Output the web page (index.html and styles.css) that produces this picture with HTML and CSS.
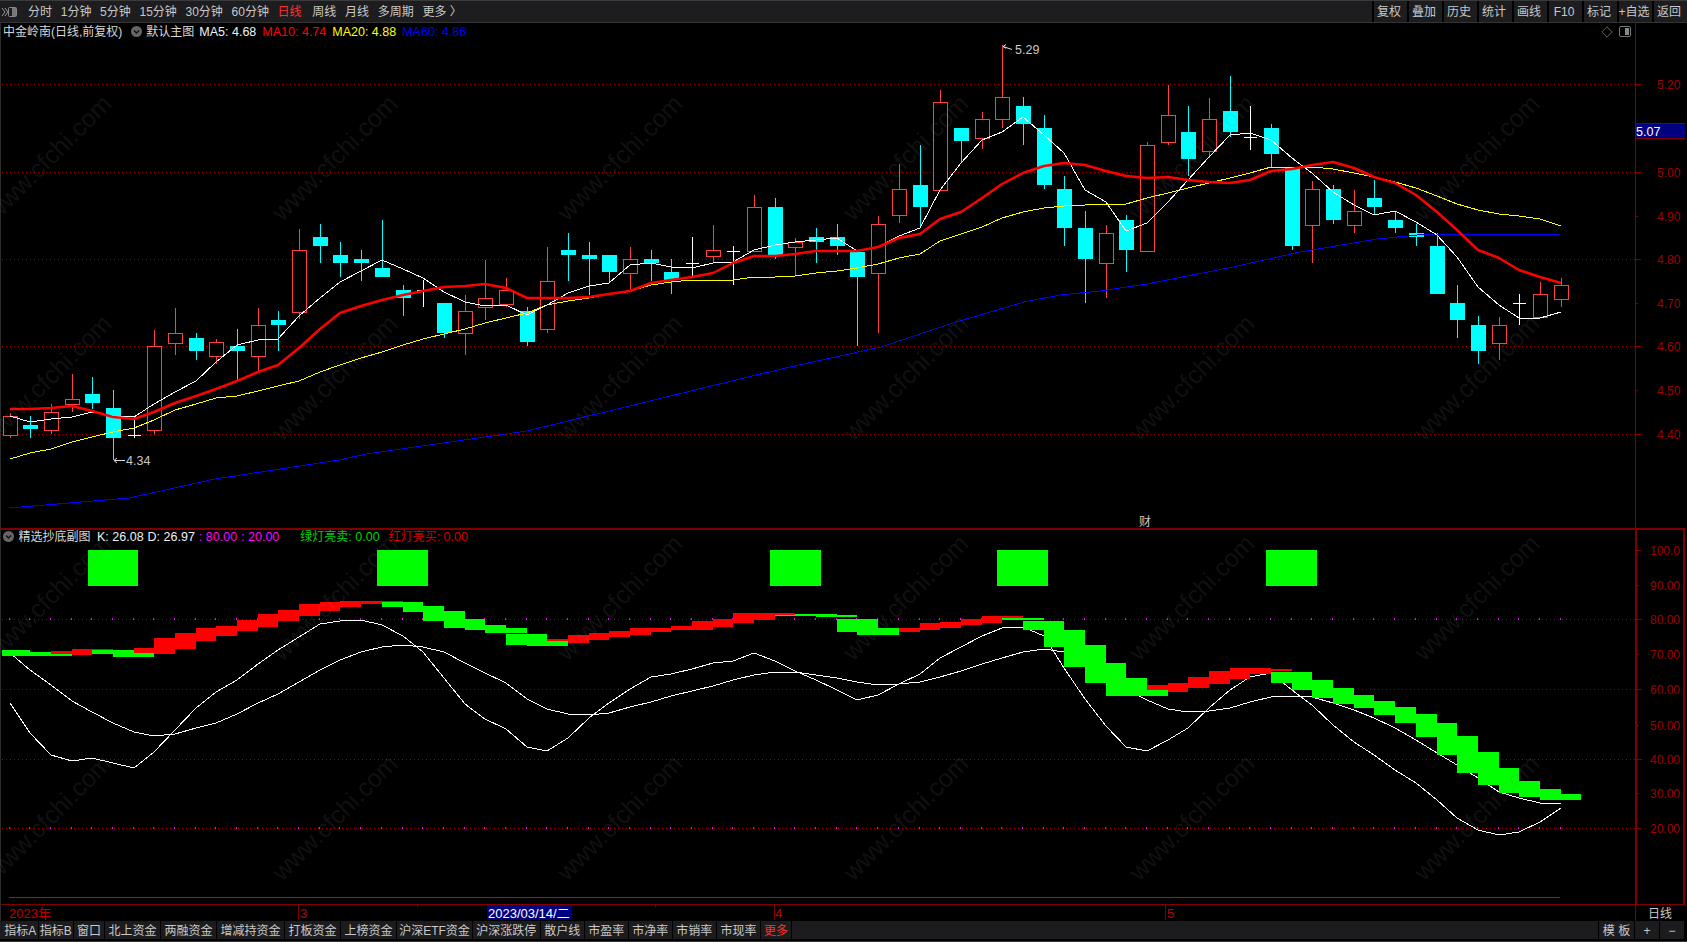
FILE: index.html
```html
<!DOCTYPE html>
<html lang="zh-CN">
<head>
<meta charset="utf-8">
<title>中金岭南 日线</title>
<link rel="stylesheet" href="styles.css">
</head>
<body>
<header class="topbar">
  <svg class="winicon" width="17" height="14" viewBox="0 0 17 14"><path d="M1 3l3 4-3 4M4 3l3 4-3 4" fill="none" stroke="#999"/><rect x="7.5" y="2.5" width="8" height="9" rx="1" fill="none" stroke="#888"/><rect x="11" y="3" width="4" height="8" fill="#777"/></svg>
  <nav class="periods">
    <span>分时</span><span>1分钟</span><span>5分钟</span><span>15分钟</span><span>30分钟</span><span>60分钟</span><span class="active">日线</span><span>周线</span><span>月线</span><span>多周期</span><span>更多 〉</span>
  </nav>
  <nav class="tools">
    <span>复权</span><span>叠加</span><span>历史</span><span>统计</span><span>画线</span><span>F10</span><span>标记</span><span>+自选</span><span>返回</span>
  </nav>
</header>

<main class="chart-area">
  <svg id="chart" class="chart-canvas" width="1687" height="899" viewBox="0 22 1687 899"></svg>
  <section class="panel-main">
    <div class="legend">
      <span class="name">中金岭南(日线,前复权)</span>
      <svg class="toggle" width="11" height="11" viewBox="0 0 11 11"><circle cx="5.5" cy="5.5" r="5.5" fill="#666"/><path d="M3 4.5l2.5 2.5L8 4.5" fill="none" stroke="#111" stroke-width="1.4"/></svg>
      <span class="name tmpl">默认主图</span>
      <span class="val c-white">MA5: 4.68</span>
      <span class="val c-red">MA10: 4.74</span>
      <span class="val c-yellow">MA20: 4.88</span>
      <span class="val c-blue">MA60: 4.86</span>
      <span class="legend-icons">
        <svg width="12" height="12" viewBox="0 0 12 12"><path d="M6 .8L11.2 6 6 11.2.8 6z" fill="none" stroke="#666"/></svg>
        <svg width="12" height="11" viewBox="0 0 12 11"><rect x=".5" y=".5" width="11" height="10" rx="1.5" fill="none" stroke="#777"/><rect x="6" y="2" width="4" height="7" fill="#888"/></svg>
      </span>
    </div>
  </section>
  <section class="panel-sub">
    <div class="legend legend-sub">
      <svg class="toggle-sub" width="11" height="11" viewBox="0 0 11 11"><circle cx="5.5" cy="5.5" r="5.5" fill="#666"/><path d="M3 4.5l2.5 2.5L8 4.5" fill="none" stroke="#111" stroke-width="1.4"/></svg>
      <span class="name subname">精选抄底副图</span>
      <span class="val tight c-white">K: 26.08</span>
      <span class="val tight c-white">D: 26.97</span>
      <span class="val tight c-magenta">: 80.00</span>
      <span class="val wide c-magenta">: 20.00</span>
      <span class="val lamp c-green"><span class="zh">绿灯亮卖</span>: 0.00</span>
      <span class="val c-dred"><span class="zh">红灯亮买</span>: 0.00</span>
    </div>
  </section>
</main>

<footer class="bottombar">
  <nav class="tabs">
    <span class="narrow">指标A</span><span class="narrow">指标B</span><span class="short">窗口</span><span>北上资金</span><span>两融资金</span><span>增减持资金</span><span>打板资金</span><span>上榜资金</span><span class="etf">沪深ETF资金</span><span>沪深涨跌停</span><span>散户线</span><span>市盈率</span><span>市净率</span><span>市销率</span><span>市现率</span><span class="short active">更多</span>
  </nav>
  <nav class="tabs-right">
    <span class="tpl">模 板</span><span class="pm">+</span><span class="pm">−</span>
  </nav>
</footer>
<div class="edge"></div>
<script src="chart.js"></script>
</body>
</html>
```

FILE: styles.css
```css
* { box-sizing: border-box; }
html, body { margin: 0; padding: 0; background: #000; }
body {
  width: 1687px; height: 942px; overflow: hidden;
  display: flex; flex-direction: column;
  font-family: "Liberation Sans", "Noto Sans CJK SC", sans-serif;
  font-size: 12px; color: #c8c8c8;
}
.topbar {
  height: 23px; flex: none; display: flex; align-items: center;
  background: #1d1d1f; border-top: 1px solid #3a3a3a; border-bottom: 1px solid #333;
}
.winicon { margin-left: 1px; flex: none; }
.periods { display: flex; gap: 8.7px; margin-left: 10px; line-height: 16px; }
.periods .active { margin-right: 2px; color: #ff3030; }
.tools { display: flex; margin-left: auto; height: 100%; line-height: 16px; }
.tools span {
  width: 35px; display: flex; align-items: center; justify-content: center;
  border-left: 2px solid #000; white-space: nowrap; padding-right: 3px;
}
.chart-area { position: relative; height: 898px; flex: none; overflow: hidden; }
.chart-canvas { position: absolute; left: 0; top: -1px; }
.panel-main { position: relative; height: 506px; }
.panel-sub { position: relative; }
.legend {
  display: flex; align-items: center; height: 17px; padding-left: 3px;
  font-size: 12.5px; line-height: 16px; white-space: nowrap;
}
.legend-sub { padding-left: 3px; height: 15px; }
.name { font-size: 12px; color: #d8d8d8; }
.zh { font-size: 12px; }
.toggle { margin-left: 9px; flex: none; }
.tmpl { margin-left: 4px; margin-right: 5px; }
.toggle-sub { flex: none; }
.subname { margin-left: 4.5px; margin-right: 6.5px; }
.val { margin-right: 6px; }
.tight { margin-right: 4px; }
.wide { margin-right: 21px; }
.lamp { margin-right: 9px; }
.legend-icons { margin-left: auto; display: flex; gap: 6px; align-items: center; margin-right: 56px; }
.c-white { color: #f0f0f0; }
.c-red { color: #ff0000; }
.c-yellow { color: #ffff00; }
.c-blue { color: #0000ff; }
.c-magenta { color: #ff00ff; }
.c-green { color: #00d000; }
.c-dred { color: #d80000; }

.bottombar {
  height: 18px; flex: none; display: flex; width: 1684px;
  background: #1c1c1e; padding-left: 3px;
}
.tabs { display: flex; }
.tabs span { padding: 0 3.5px; border-right: 1px solid #000; line-height: 20px; white-space: nowrap; }
.tabs .narrow { padding: 0 1.25px; }
.tabs .short { padding: 0 3px; }
.tabs .etf { padding: 0 2px; }
.tabs .active { color: #ff3030; }
.tabs-right { display: flex; margin-left: auto; }
.tabs-right span { display: block; line-height: 20px; text-align: center; border-left: 1px solid #000; }
.tpl { width: 36px; }
.pm { width: 25px; }
.edge { height: 3px; flex: none; border-top: 1px solid #000; border-bottom: 1px solid #333; }

.mark { font-size: 12.5px; fill: #c8c8c8; }
.axis-label { font-size: 12px; fill: #a00000; }
.sub-label { font-size: 12px; fill: #a00000; }
.price-tag { font-size: 12.5px; fill: #fff; }
.date-mark { font-size: 13px; fill: #c00000; }
.date-cursor { font-size: 13px; fill: #fff; }
.period-label { font-size: 12px; fill: #c8c8c8; }
.watermark { font-size: 25px; fill: rgba(128, 128, 128, .14); }
```

FILE: chart.js
```js
var svg = document.getElementById('chart');
var NS = 'http://www.w3.org/2000/svg';
function el(tag, attrs, text, parent) {
  var n = document.createElementNS(NS, tag);
  for (var k in attrs) n.setAttribute(k, attrs[k]);
  if (text != null) n.textContent = text;
  (parent || svg).appendChild(n);
  return n;
}
function X(i) { return Math.round(9.6 + 20.68 * i); }
function line(x1, y1, x2, y2, stroke, extra) {
  var a = { x1: x1, y1: y1, x2: x2, y2: y2, stroke: stroke, 'shape-rendering': 'crispEdges' };
  for (var k in extra) a[k] = extra[k];
  return el('line', a);
}
function rect(x, y, w, h, fill) {
  return el('rect', { x: x, y: y, width: w, height: h, fill: fill, 'shape-rendering': 'crispEdges' });
}
function poly(ys, stroke, width) {
  var pts = ys.map(function (y, i) { return X(i) + ',' + y; }).join(' ');
  return el('polyline', { points: pts, fill: 'none', stroke: stroke, 'stroke-width': width, 'stroke-linejoin': 'round', 'shape-rendering': width > 1 ? 'auto' : 'crispEdges' });
}
var DR = '#800000', DOT = { 'stroke-dasharray': '1 3' };

/* grid */
[84.5, 172.5, 259.5, 346.5, 434.5, 619.5, 689.5, 759.5, 828.5].forEach(function (y) {
  line(2, y, 1635, y, '#a00000', DOT);
});
for (var m = 0; m < 76; m++) {
  rect(X(m) - 1, 618, 1, 2, '#ff00ff');
  rect(X(m) - 1, 827, 1, 2, '#ff00ff');
}

/* candles: type, high, top, bottom, low */
var C = [
['r',413,416,435,438],['c',416,425,429,438],['r',404,412,430,434],['r',374,399,404,412],['c',377,394,403,409],
['c',390,408,438,460],['w',417,435,435,438],['r',330,346,430,434],['r',308,333,343,355],['c',333,338,351,360],
['r',339,342,356,364],['c',329,346,351,380],['r',308,325,356,372],['c',311,320,325,351],['r',229,250,312,319],
['c',224,237,246,263],['c',242,255,263,277],['c',250,259,263,281],['c',220,268,277,277],['c',285,290,298,316],
['w',280,290,290,307],['c',303,303,333,338],['r',295,311,333,355],['r',260,298,307,320],['r',278,290,304,307],
['c',307,311,342,346],['r',247,281,329,333],['c',233,250,255,281],['c',242,255,259,295],['c',255,255,272,282],
['r',247,259,273,289],['c',250,259,263,281],['c',259,272,280,294],['w',237,263,263,277],['r',225,250,256,263],
['w',246,251,251,285],['r',195,207,251,251],['c',198,207,255,259],['r',238,242,247,276],['c',228,237,242,263],
['c',224,237,246,255],['c',250,252,277,346],['r',216,224,273,333],['r',164,189,215,223],['c',145,185,207,228],
['r',90,102,190,190],['c',128,128,141,163],['r',112,119,138,149],['r',45,97,119,128],['c',97,106,124,145],
['c',115,128,185,189],['c',176,189,228,246],['c',211,228,259,303],['r',225,233,263,298],['c',215,220,250,272],
['r',142,145,251,251],['r',85,115,142,145],['c',106,132,159,176],['r',98,119,151,158],['c',76,111,132,137],
['w',106,137,137,150],['c',124,128,154,167],['c',168,168,246,250],['r',181,189,225,263],['c',185,189,220,224],
['r',190,211,225,233],['c',180,198,207,215],['c',211,220,228,233],['c',224,233,237,246],['c',233,246,294,294],
['c',285,303,320,338],['c',316,325,351,364],['r',317,325,343,360],['w',294,303,303,325],['r',282,294,317,317],
['r',278,285,299,307]
];
C.forEach(function (c, i) {
  var x = X(i), t = c[0];
  if (t === 'w') {
    line(x + .5, c[1], x + .5, c[4], '#fff');
    line(x - 6, c[2] + .5, x + 7, c[2] + .5, '#fff');
    return;
  }
  var col = t === 'r' ? '#ff4040' : '#00ffff';
  line(x + .5, c[1], x + .5, c[2], col);
  line(x + .5, c[3], x + .5, c[4], col);
  if (t === 'c') {
    rect(x - 7, c[2], 15, c[3] - c[2], col);
  } else {
    el('rect', { x: x - 6.5, y: c[2] + .5, width: 14, height: c[3] - c[2], fill: '#000', stroke: col, 'shape-rendering': 'crispEdges' });
  }
});

/* MA lines */
var blue = [[9,508],[129,498],[215,479],[339,460],[366,454],[527,431],[781,369],[881,347],[953,323],[1024,302],[1060,295],[1100,291],[1147,284],[1233,267],[1300,252],[1377,239],[1427,234],[1550,234],[1560,235]];
el('polyline', { points: blue.map(function (p) { return p.join(','); }).join(' '), fill: 'none', stroke: '#0000ff', 'shape-rendering': 'crispEdges' });
poly([459,453,449,442,437,432,428,420,410,404,398,396,391,386,381,372,365,358,352,345,339,334,329,323,318,313,305,301,298,294,291,285,282,280,280,280,277,277,276,273,271,268,264,258,254,241,234,227,218,212,208,206,205,204,204,198,193,188,183,178,173,167,167,167,169,173,177,182,188,196,204,210,214,216,219,226], '#ffff00', 1);
poly([416,422,419,417,412,416,417,404,392,381,362,345,340,339,316,298,282,271,260,269,278,292,302,306,305,315,305,293,286,283,265,263,267,268,263,262,250,245,242,240,238,251,247,236,228,190,163,140,132,117,135,153,190,202,231,223,202,180,157,135,133,140,158,173,192,205,215,211,222,235,257,287,305,318,318,312], '#ffffff', 1);
poly([409,409,408,406,411,417,419,412,403,396,389,381,372,365,348,329,313,306,300,295,291,287,286,284,288,298,298,298,297,294,291,283,280,277,273,263,256,256,254,251,251,251,247,238,234,219,212,198,184,173,166,163,165,171,176,178,177,180,182,183,180,171,169,165,162,168,177,183,195,212,230,250,258,270,277,283], '#ff0000', 2.5);

/* top and bottom price marks */
el('path', { d: 'M1012 49.5L1003 46.5M1003 46.5l3-2M1003 46.5l3 1.8', fill: 'none', stroke: '#ddd' });
el('text', { x: 1015, y: 54, 'class': 'mark' }, '5.29');
el('path', { d: 'M125 460.5H114M114 460.5l3-2.5M114 460.5l3 2.5', fill: 'none', stroke: '#ddd' });
el('text', { x: 126, y: 464.5, 'class': 'mark' }, '4.34');
el('text', { x: 1139, y: 525.5, 'class': 'period-label' }, '财');

/* panel frame */
line(.5, 22, .5, 921, '#2c2c2c');
line(1635.5, 22, 1635.5, 528, DR);
line(1635.5, 904, 1635.5, 921, DR);
rect(1, 528, 1684, 2, DR);
rect(1, 904, 1684, 1, DR);
rect(1635, 529, 2, 376, DR);
rect(1683, 529, 2, 376, DR);

/* main axis */
[['5.20',84],['',128],['5.00',172],['4.90',216],['4.80',259],['4.70',303],['4.60',346],['4.50',390],['4.40',434]].forEach(function (a, i) {
  line(1635, a[1] + .5, 1635 + (i % 2 ? 3 : 6), a[1] + .5, DR);
  if (a[0]) el('text', { x: 1657, y: a[1] + 4.5, 'class': 'axis-label' }, a[0]);
});
rect(1636, 123, 49, 16, '#000080');
rect(1636, 123, 49, 1, DR);
rect(1636, 138, 49, 1, DR);
el('text', { x: 1636, y: 135.5, 'class': 'price-tag' }, '5.07');

/* sub panel */
[['100.0',550],['90.00',585],['80.00',619],['70.00',654],['60.00',689],['50.00',725],['40.00',759],['30.00',793],['20.00',828]].forEach(function (a, i) {
  line(1637, a[1] + .5, 1637 + (i % 2 ? 2 : 5), a[1] + .5, DR);
  el('text', { x: 1650, y: a[1] + 4.5, 'class': 'sub-label' }, a[0]);
});
[[88,138],[377,428],[770,821],[997,1048],[1266,1317]].forEach(function (s) {
  rect(s[0], 550, s[1] - s[0], 36, '#00ff00');
});
poly([703,733,755,761,758,763,768,752,730,708,692,680,664,650,637,624,621,620,625,636,652,678,704,719,729,747,751,738,718,703,689,677,674,669,663,661,653,661,671,680,690,700,695,684,674,658,647,636,628,627,636,668,699,726,747,751,740,728,708,690,677,673,690,705,725,742,755,770,783,800,818,830,835,832,822,808], '#fff', 1);
poly([653,670,685,701,712,723,732,736,734,728,723,714,703,694,682,670,660,652,647,645,647,652,663,673,683,699,709,714,715,713,707,702,696,691,686,680,675,672,672,675,678,682,685,684,682,677,671,664,658,652,649,652,665,680,690,700,709,712,711,708,702,697,696,697,703,710,718,728,740,753,765,778,792,798,803,803], '#fff', 1);

/* KD band: colour, top, bottom triples per bar */
var G = '#00ff00', R = '#ff0000';
var B = [
[G,650,656],[G,652,656],[G,652,656,R,651,654],[R,649,655],[G,650,654,R,649,650],[G,650,657],[G,653,657,R,648,653],
[R,638,654],[R,633,649],[R,628,641],[R,626,636],[R,620,631],[R,614,627],[R,610,621],[R,604,616],[R,602,611],[R,601,607],[R,601,604],
[G,602,607,R,601,602],[G,602,612],[G,606,621],[G,611,628],[G,619,630],[G,625,633],[G,628,633,G,634,645],[G,634,646],[G,641,646,R,639,641],
[R,635,643],[R,633,640],[R,631,637],[R,628,635],[R,628,632],[R,626,630],[R,621,630],[R,619,627],[R,613,623],[R,613,620],
[G,614,616,R,613,615],[G,614,616],[G,614,617],[G,619,632,G,615,617],[G,619,635],[G,628,635],[R,628,632],[R,623,630],[R,622,628],[R,619,625],[R,616,623],
[R,616,618,G,618,620],[G,618,620,G,621,630],[G,621,647],[G,630,667],[G,645,683],[G,663,696],[G,678,696],[R,685,690,G,690,696],
[R,683,692],[R,677,688],[R,671,684],[R,668,679],[R,668,674],[R,669,671,G,672,683],[G,672,690],[G,680,698],[G,688,704],[G,695,708],
[G,701,715],[G,707,723],[G,714,737],[G,723,755],[G,736,773],[G,752,785],[G,768,793],[G,781,797],[G,789,800],[G,794,800]
];
B.forEach(function (b, j) {
  var x0 = j === 0 ? 2 : X(j), x1 = X(j + 1);
  for (var n = 0; n < b.length; n += 3) rect(x0, b[n + 1], x1 - x0, b[n + 2] - b[n + 1], b[n]);
});
line(9, 897.5, 1560, 897.5, '#d80000');

/* time axis */
[298, 774, 1165].forEach(function (x) { line(x + .5, 905, x + .5, 920, DR); });
[417, 655].forEach(function (x) { line(x + .5, 905, x + .5, 907, DR); });
el('text', { x: 9, y: 918, 'class': 'date-mark' }, '2023年');
el('text', { x: 300, y: 918, 'class': 'date-mark' }, '3');
el('text', { x: 775, y: 918, 'class': 'date-mark' }, '4');
el('text', { x: 1167, y: 918, 'class': 'date-mark' }, '5');
rect(487, 905, 85, 15, '#000080');
el('text', { x: 488, y: 917.5, 'class': 'date-cursor' }, '2023/03/14/二');
el('text', { x: 1648, y: 917.5, 'class': 'period-label' }, '日线');

/* watermark */
[49, 335, 620, 906, 1192, 1477].forEach(function (cx) {
  [158, 378, 598, 818].forEach(function (cy) {
    el('text', { x: cx, y: cy + 8, 'text-anchor': 'middle', transform: 'rotate(-45 ' + cx + ' ' + cy + ')', 'class': 'watermark' }, 'www.cfchi.com');
  });
});
```
